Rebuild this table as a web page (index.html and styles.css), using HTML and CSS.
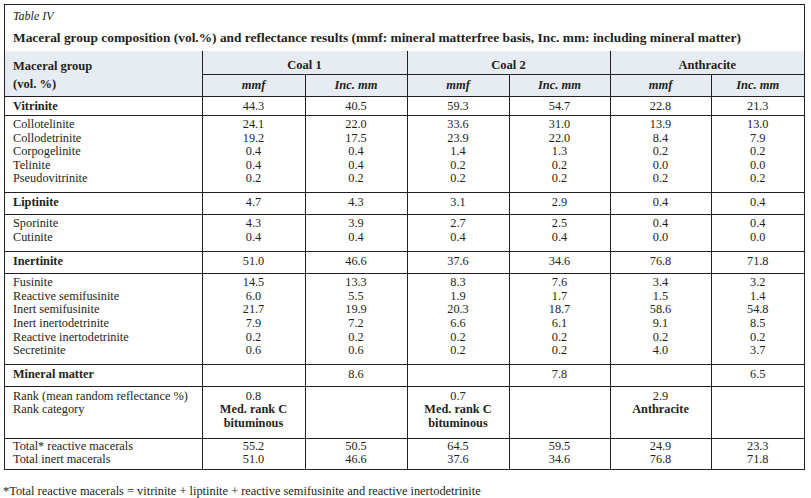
FILE: index.html
```html
<!DOCTYPE html>
<html lang="en">
<head>
<meta charset="utf-8">
<title>Table IV</title>
<link rel="stylesheet" href="styles.css">
</head>
<body>
<div class="page">
  <div class="frame">
    <div class="label">Table IV</div>
    <div class="title">Maceral group composition (vol.%) and reflectance results (mmf: mineral matterfree basis, Inc. mm: including mineral matter)</div>
    <table class="data">
      <colgroup>
        <col class="w-name">
        <col class="w-a">
        <col class="w-b">
        <col class="w-b">
        <col class="w-c">
        <col class="w-c">
        <col class="w-d">
      </colgroup>
      <thead>
        <tr class="h1">
          <th rowspan="2" class="hname">Maceral group<br>(vol. %)</th>
          <th colspan="2">Coal 1</th>
          <th colspan="2">Coal 2</th>
          <th colspan="2">Anthracite</th>
        </tr>
        <tr class="h2">
          <th>mmf</th><th>Inc. mm</th>
          <th>mmf</th><th>Inc. mm</th>
          <th>mmf</th><th>Inc. mm</th>
        </tr>
      </thead>
      <tbody>
        <tr class="group tight">
          <td class="name">Vitrinite</td>
          <td>44.3</td><td>40.5</td><td>59.3</td><td>54.7</td><td>22.8</td><td>21.3</td>
        </tr>
        <tr class="block">
          <td class="name">Collotelinite<br>Collodetrinite<br>Corpogelinite<br>Telinite<br>Pseudovitrinite</td>
          <td>24.1<br>19.2<br>0.4<br>0.4<br>0.2</td>
          <td>22.0<br>17.5<br>0.4<br>0.4<br>0.2</td>
          <td>33.6<br>23.9<br>1.4<br>0.2<br>0.2</td>
          <td>31.0<br>22.0<br>1.3<br>0.2<br>0.2</td>
          <td>13.9<br>8.4<br>0.2<br>0.0<br>0.2</td>
          <td>13.0<br>7.9<br>0.2<br>0.0<br>0.2</td>
        </tr>
        <tr class="group">
          <td class="name">Liptinite</td>
          <td>4.7</td><td>4.3</td><td>3.1</td><td>2.9</td><td>0.4</td><td>0.4</td>
        </tr>
        <tr class="block loose">
          <td class="name">Sporinite<br>Cutinite</td>
          <td>4.3<br>0.4</td>
          <td>3.9<br>0.4</td>
          <td>2.7<br>0.4</td>
          <td>2.5<br>0.4</td>
          <td>0.4<br>0.0</td>
          <td>0.4<br>0.0</td>
        </tr>
        <tr class="group">
          <td class="name">Inertinite</td>
          <td>51.0</td><td>46.6</td><td>37.6</td><td>34.6</td><td>76.8</td><td>71.8</td>
        </tr>
        <tr class="block">
          <td class="name">Fusinite<br>Reactive semifusinite<br>Inert semifusinite<br>Inert inertodetrinite<br>Reactive inertodetrinite<br>Secretinite</td>
          <td>14.5<br>6.0<br>21.7<br>7.9<br>0.2<br>0.6</td>
          <td>13.3<br>5.5<br>19.9<br>7.2<br>0.2<br>0.6</td>
          <td>8.3<br>1.9<br>20.3<br>6.6<br>0.2<br>0.2</td>
          <td>7.6<br>1.7<br>18.7<br>6.1<br>0.2<br>0.2</td>
          <td>3.4<br>1.5<br>58.6<br>9.1<br>0.2<br>4.0</td>
          <td>3.2<br>1.4<br>54.8<br>8.5<br>0.2<br>3.7</td>
        </tr>
        <tr class="group">
          <td class="name">Mineral matter</td>
          <td></td><td>8.6</td><td></td><td>7.8</td><td></td><td>6.5</td>
        </tr>
        <tr class="block rank">
          <td class="name">Rank (mean random reflectance %)<br>Rank category</td>
          <td>0.8<br><b>Med. rank C<br>bituminous</b></td>
          <td></td>
          <td>0.7<br><b>Med. rank C<br>bituminous</b></td>
          <td></td>
          <td>2.9<br><b>Anthracite</b></td>
          <td></td>
        </tr>
        <tr class="block totals">
          <td class="name">Total* reactive macerals<br>Total inert macerals</td>
          <td>55.2<br>51.0</td>
          <td>50.5<br>46.6</td>
          <td>64.5<br>37.6</td>
          <td>59.5<br>34.6</td>
          <td>24.9<br>76.8</td>
          <td>23.3<br>71.8</td>
        </tr>
      </tbody>
    </table>
  </div>
  <p class="note">*Total reactive macerals = vitrinite + liptinite + reactive semifusinite and reactive inertodetrinite</p>
</div>
</body>
</html>
```

FILE: styles.css
```css
html, body {
  margin: 0;
  padding: 0;
  background: #ffffff;
}

body {
  color: #231f20;
  font-family: "Liberation Serif", "Times New Roman", serif;
}

.page {
  padding: 4px 0 0 4px;
  width: 801px;
}

.frame {
  border: 1px solid #231f20;
}

.label {
  font-style: italic;
  font-size: 12px;
  line-height: 14px;
  padding: 4px 0 0 8px;
}

.title {
  font-weight: bold;
  font-size: 13.4px;
  line-height: 16px;
  padding: 7px 0 5px 8px;
  white-space: nowrap;
}

.data {
  width: 799px;
  border-collapse: collapse;
  table-layout: fixed;
  font-size: 12.3px;
}

.w-name { width: 197px; }
.w-a { width: 103px; }
.w-b { width: 102px; }
.w-c { width: 101px; }
.w-d { width: 93px; }

.data .h1 th,
.data .h2 th {
  background: #e7ecf2;
  font-weight: bold;
  font-size: 12.5px;
  text-align: center;
  vertical-align: top;
  line-height: 15px;
}

.data .h1 th {
  padding: 7px 0 1px;
  border-left: 1px solid #231f20;
}

.data .h1 th.hname {
  border-left: none;
  text-align: left;
  padding: 6px 0 0 8px;
  line-height: 18px;
}

.data .h2 th {
  padding: 3px 0 3px;
  font-style: italic;
  border-top: 1px solid #231f20;
  border-left: 1px solid #231f20;
}

.data td {
  padding: 0;
  text-align: center;
  vertical-align: top;
  border-top: 1px solid #231f20;
  border-left: 1px solid #231f20;
  white-space: nowrap;
}

.data td.name {
  text-align: left;
  padding-left: 8px;
  border-left: none;
}

.data .group td {
  padding-top: 2px;
  padding-bottom: 5px;
  line-height: 14px;
}

.data .group td.name {
  font-weight: bold;
}

.data .group.tight td {
  padding-top: 2px;
  padding-bottom: 2px;
}

.data .block td {
  line-height: 13.6px;
  padding-top: 2px;
  padding-bottom: 6px;
}

.data .block.loose td {
  padding-bottom: 7px;
}

.data .block.rank td {
  padding-top: 3px;
  padding-bottom: 7px;
}

.data .block.totals td {
  padding-top: 1px;
  padding-bottom: 2px;
}

.note {
  margin: 14px 0 0 -1px;
  font-size: 12.4px;
  line-height: 14px;
}
```
